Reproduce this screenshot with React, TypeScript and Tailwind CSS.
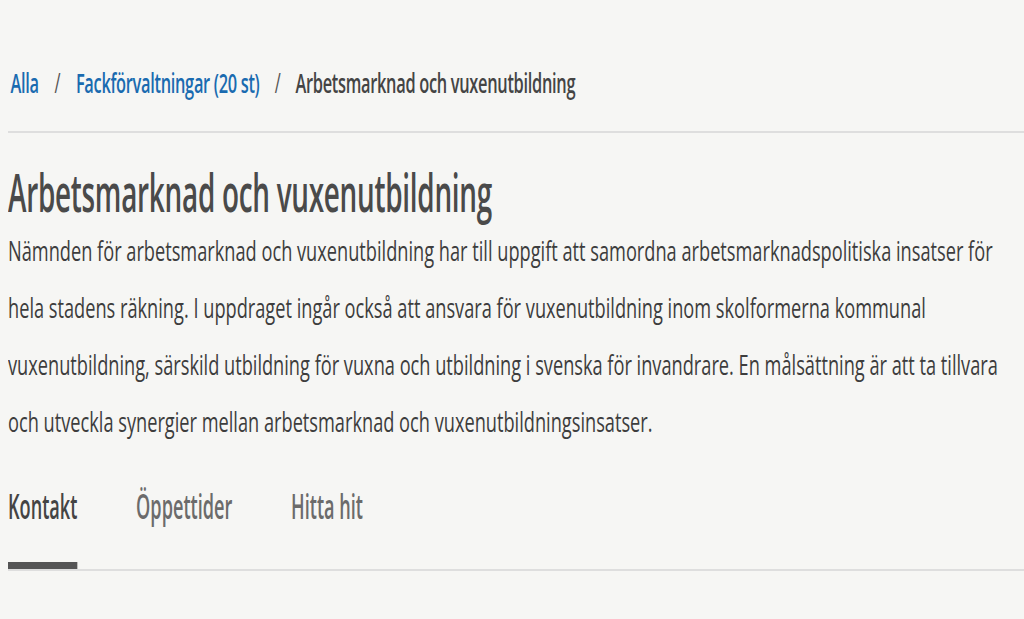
import React from "react";

const para =
  "Nämnden för arbetsmarknad och vuxenutbildning har till uppgift att samordna arbetsmarknadspolitiska insatser för hela stadens räkning. I uppdraget ingår också att ansvara för vuxenutbildning inom skolformerna kommunal vuxenutbildning, särskild utbildning för vuxna och utbildning i svenska för invandrare. En målsättning är att ta tillvara och utveckla synergier mellan arbetsmarknad och vuxenutbildningsinsatser.";

export default function App() {
  return (
    <div className="w-full min-h-[619px] overflow-hidden bg-[#f6f6f4] font-['Open_Sans',sans-serif]">
      {/* the shot is squeezed horizontally, so lay out wide and scale down */}
      <div className="w-[1536px] origin-top-left scale-x-[0.6667] pl-3">
        <nav className="h-[133px] pt-[36px] border-b-2 border-[#dedede]">
          <div className="h-full flex items-center origin-left scale-x-[0.91] text-[27px] tracking-[-0.5px]">
            <a className="ml-[4px] text-[#1a6bb0] font-semibold">Alla</a>
            <span className="mx-[26px] text-[#555]">/</span>
            <a className="text-[#1a6bb0] font-semibold">Fackförvaltningar (20 st)</a>
            <span className="mx-[25px] text-[#555]">/</span>
            <span className="text-[#444] font-semibold">Arbetsmarknad och vuxenutbildning</span>
          </div>
        </nav>

        <h1 className="mt-[29px] text-[52px] leading-[60px] font-semibold text-[#4a4a4a] tracking-[-0.5px]">
          <span className="inline-block origin-left scale-x-[0.804] whitespace-nowrap">
            Arbetsmarknad och vuxenutbildning
          </span>
        </h1>
        <p className="text-[27.3px] leading-[57px] text-[#3d3d3d]">{para}</p>

        <div className="mt-[26px] border-b-2 border-[#dedede]">
          <div className="flex origin-left scale-x-[0.8] text-[34px] font-semibold leading-[60px]">
            <div className="flex flex-col">
              <span className="text-[#444]">Kontakt</span>
              <div className="mt-[26px] h-[7px] bg-[#555]" />
            </div>
            <span className="ml-[110px] text-[#6b6b6b]">Öppettider</span>
            <span className="ml-[110px] text-[#6b6b6b]">Hitta hit</span>
          </div>
        </div>
      </div>
    </div>
  );
}
